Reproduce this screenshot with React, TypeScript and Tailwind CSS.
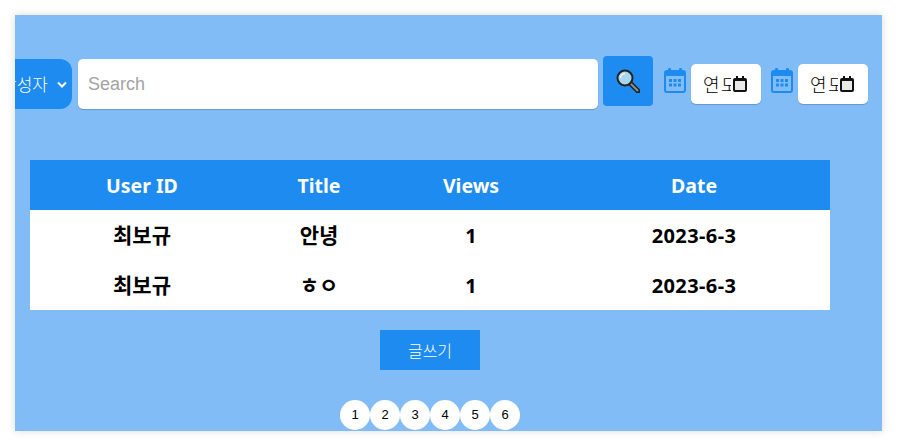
import React from "react";

const rows = [
  { user: "최보규", title: "안녕", views: 1, date: "2023-6-3" },
  { user: "최보규", title: "ㅎㅇ", views: 1, date: "2023-6-3" },
];

const CalendarIcon = () => (
  <svg width="22" height="25" viewBox="0 0 22 25" className="mt-3 shrink-0">
    <rect x="4" y="0" width="3" height="6" rx="1" fill="#1e8bf1" />
    <rect x="15" y="0" width="3" height="6" rx="1" fill="#1e8bf1" />
    <rect x="1" y="3" width="20" height="21" rx="2" fill="#82bcf7" stroke="#1e8bf1" strokeWidth="2" />
    <rect x="1" y="3" width="20" height="5" fill="#1e8bf1" />
    {[5, 9.5, 14].map((x) =>
      [11, 15.5].map((y) => <rect key={`${x}-${y}`} x={x} y={y} width="3" height="3" fill="#1e8bf1" />)
    )}
  </svg>
);

const DateBox = () => (
  <div className="mt-2 flex h-10 w-[70px] shrink-0 items-center overflow-hidden rounded-[5px] bg-white pl-[12px] shadow-[0_1px_1px_rgba(0,0,0,0.2)] font-['Noto_Sans_CJK_KR',sans-serif] text-[18px] font-light text-black">
    <span className="mr-[2px] w-[28px] overflow-hidden whitespace-nowrap tracking-[1.5px]">연도</span>
    <svg width="14" height="16" viewBox="0 0 14 16" className="shrink-0">
      <rect x="0" y="2" width="14" height="14" rx="2" fill="#111" />
      <rect x="2" y="5" width="10" height="9" fill="#e8e8e8" />
      <rect x="3" y="0" width="2" height="3" fill="#111" />
      <rect x="9" y="0" width="2" height="3" fill="#111" />
    </svg>
  </div>
);

const App: React.FC = () => {
  return (
    <div className="h-[447px] w-[897px] overflow-hidden bg-white pl-[15px] pt-[15px]">
      <div className="h-[416px] w-[867px] overflow-hidden bg-[#82bcf7] shadow-[0_0_8px_rgba(0,0,0,0.15)] font-['Liberation_Sans',sans-serif]">
        {/* search bar */}
        <div className="mt-[41px] flex items-start">
          <div className="ml-[-20px] mt-[3px] flex h-[50px] w-[77px] shrink-0 items-center gap-[9px] rounded-[12px] bg-[#1e8bf1] pl-[6px] font-['Noto_Sans_CJK_KR',sans-serif] text-[17px] font-light text-white">
            <span className="whitespace-nowrap">작성자</span>
            <svg width="10" height="7" viewBox="0 0 10 7" fill="none" stroke="white" strokeWidth="2" className="shrink-0">
              <path d="M1 1.5 5 5.5 9 1.5" />
            </svg>
          </div>
          <input
            placeholder="Search"
            className="ml-[6px] mt-[3px] h-[50px] w-[520px] shrink-0 rounded-[5px] bg-white px-[10px] text-[18px] shadow-[0_1px_1px_rgba(0,0,0,0.2)] outline-none placeholder:text-[#a3a3a3]"
          />
          <button className="ml-[5px] flex h-[50px] w-[50px] shrink-0 items-center justify-center rounded-[4px] bg-[#1e8bf1]">
            <svg width="24" height="24" viewBox="0 0 24 24">
              <path d="M14 14 22 22" stroke="#222" strokeWidth="5" strokeLinecap="round" />
              <path d="M15 15 21.5 21.5" stroke="#8a8f94" strokeWidth="2" strokeLinecap="round" />
              <circle cx="9" cy="9" r="7.5" fill="#a9d6ee" stroke="#222" strokeWidth="2" />
              <path d="M4.5 9a4.5 4.5 0 0 1 4.5-4.5" fill="none" stroke="#e4f4fc" strokeWidth="1.5" />
            </svg>
          </button>
          <div className="ml-[11px] flex gap-[5px]">
            <CalendarIcon />
            <DateBox />
          </div>
          <div className="ml-[10px] flex gap-[5px]">
            <CalendarIcon />
            <DateBox />
          </div>
        </div>

        {/* board table */}
        <table className="ml-[15px] mt-[51px] w-[800px] table-fixed border-collapse bg-white font-['Noto_Sans',sans-serif] text-[20px] font-bold text-black">
          <colgroup>
            <col className="w-[224px]" />
            <col className="w-[130px]" />
            <col className="w-[174px]" />
            <col className="w-[272px]" />
          </colgroup>
          <thead className="bg-[#1e8bf1] text-[19.5px] text-white">
            <tr className="h-[50px] leading-none">
              <th className="pt-[2px] font-bold">User ID</th>
              <th className="pt-[2px] font-bold">Title</th>
              <th className="pt-[2px] font-bold">Views</th>
              <th className="pt-[2px] font-bold">Date</th>
            </tr>
          </thead>
          <tbody className="font-['Noto_Sans','Noto_Sans_CJK_KR',sans-serif]">
            {rows.map((row, i) => (
              <tr key={i} className="h-[50px] text-center leading-none">
                <td className="pt-[1px] text-[21px]">{row.user}</td>
                <td className="pt-[1px] text-[21px]">{row.title}</td>
                <td className="pt-[2px]">{row.views}</td>
                <td className="pt-[2px] tracking-[0.4px]">{row.date}</td>
              </tr>
            ))}
          </tbody>
        </table>

        <button className="ml-[365px] mt-[20px] block h-10 w-[100px] bg-[#1e8bf1] font-['Noto_Sans_CJK_KR',sans-serif] text-[16px] font-light text-white">
          글쓰기
        </button>

        <div className="ml-[325px] mt-[30px] flex">
          {[1, 2, 3, 4, 5, 6].map((n) => (
            <div key={n} className="flex h-[30px] w-[30px] items-center justify-center rounded-full bg-white text-[13px] text-black">
              {n}
            </div>
          ))}
        </div>
      </div>
    </div>
  );
};

export default App;
